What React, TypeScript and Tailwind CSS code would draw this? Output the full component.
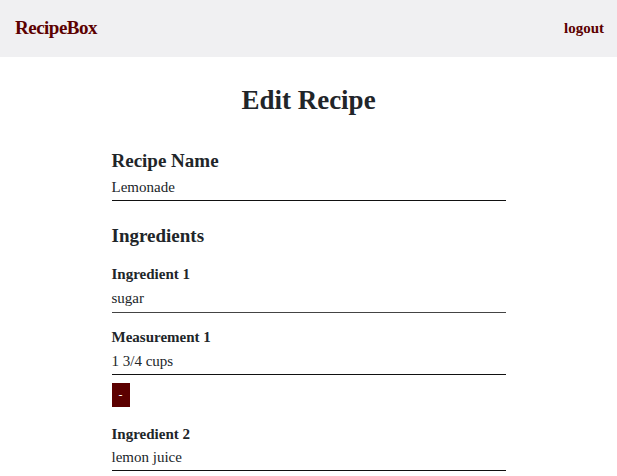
export default function App() {
  const serif = { fontFamily: '"Liberation Serif", "DejaVu Serif", serif' };
  return (
    <div className="min-h-screen bg-white text-[#212529]" style={serif}>
      {/* Navbar */}
      <nav className="flex h-[57px] items-center justify-between bg-[#f0f0f2] pl-[15px] pr-[13px]">
        <span className="text-[19px] font-bold tracking-[-0.5px] text-[#5c0000]">RecipeBox</span>
        <span className="text-[15px] font-bold text-[#5c0000]">logout</span>
      </nav>

      <h1 className="mt-[25px] text-center text-[27px] font-bold leading-[36px]">Edit Recipe</h1>

      <form className="mx-auto mt-[30px] w-[394px]">
        <div>
          <label className="block text-[19px] font-bold leading-[26px]">Recipe Name</label>
          <div className="mt-[3px] border-b border-[#111] pb-[3px] text-[15px] leading-[20px]">Lemonade</div>
        </div>

        <h2 className="mt-[22px] text-[19px] font-bold leading-[26px]">Ingredients</h2>

        <div className="mt-[15px]">
          <label className="block text-[15px] font-bold leading-[20px]">Ingredient 1</label>
          <div className="mt-[4px] border-b border-[#444] pb-[4px] text-[15px] leading-[20px]">sugar</div>
        </div>
        <div className="mt-[14px]">
          <label className="block text-[15px] font-bold leading-[20px]">Measurement 1</label>
          <div className="mt-[4px] border-b border-[#111] pb-[3px] text-[15px] leading-[20px]">1 3/4 cups</div>
        </div>
        <button
          type="button"
          className="mt-[8px] block h-[24px] w-[18px] bg-[#5c0000] text-[12px] leading-[24px] text-white"
        >
          -
        </button>
        <div className="mt-[17px]">
          <label className="block text-[15px] font-bold leading-[20px]">Ingredient 2</label>
          <div className="mt-[3px] border-b border-[#111] pb-[3px] text-[15px] leading-[20px]">lemon juice</div>
        </div>
      </form>
    </div>
  );
}
